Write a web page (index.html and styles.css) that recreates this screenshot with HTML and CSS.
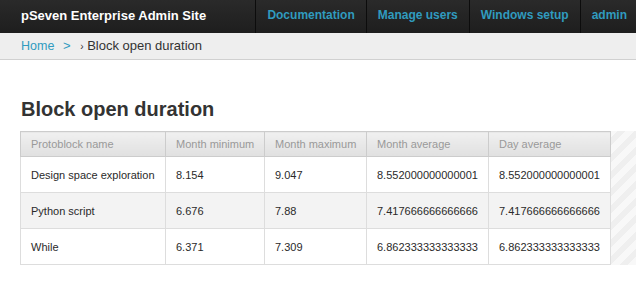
FILE: index.html
```html
<!DOCTYPE html>
<html lang="en">
<head>
    <meta charset="UTF-8">
    <title>Block open duration | pSeven Enterprise Admin Site</title>
    <link rel="stylesheet" href="styles.css">
</head>
<body>
    <header id="header">
        <div class="branding">pSeven Enterprise Admin Site</div>
        <nav class="user-tools">
            <a href="#">Documentation</a>
            <a href="#">Manage users</a>
            <a href="#">Windows setup</a>
            <a href="#">admin</a>
        </nav>
    </header>
    <div class="breadcrumbs">
        <a href="#">Home</a>
        <span class="sep">&gt;</span>
        <span class="current"><span class="mark">›</span> Block open duration</span>
    </div>
    <div id="content">
        <h1>Block open duration</h1>
        <div class="results">
            <table id="result_list">
                <thead>
                    <tr>
                        <th class="col-name">Protoblock name</th>
                        <th class="col-min">Month minimum</th>
                        <th class="col-max">Month maximum</th>
                        <th class="col-avg">Month average</th>
                        <th class="col-day">Day average</th>
                    </tr>
                </thead>
                <tbody>
                    <tr>
                        <td>Design space exploration</td>
                        <td>8.154</td>
                        <td>9.047</td>
                        <td>8.552000000000001</td>
                        <td>8.552000000000001</td>
                    </tr>
                    <tr class="row2">
                        <td>Python script</td>
                        <td>6.676</td>
                        <td>7.88</td>
                        <td>7.417666666666666</td>
                        <td>7.417666666666666</td>
                    </tr>
                    <tr>
                        <td>While</td>
                        <td>6.371</td>
                        <td>7.309</td>
                        <td>6.862333333333333</td>
                        <td>6.862333333333333</td>
                    </tr>
                </tbody>
            </table>
        </div>
    </div>
</body>
</html>
```

FILE: styles.css
```css
body {
    margin: 0;
    padding: 0;
    font-family: "Liberation Sans", Arial, sans-serif;
    font-size: 12px;
    color: #333;
    background: #fff;
}

a {
    color: #309bbf;
    text-decoration: none;
}

/* top bar */
#header {
    display: flex;
    justify-content: space-between;
    align-items: stretch;
    height: 33px;
    background: linear-gradient(#2a2a2a, #1e1e1e);
    color: #fff;
    white-space: nowrap;
}

.branding {
    padding-left: 21px;
    line-height: 31px;
    font-size: 13px;
    font-weight: bold;
}

.user-tools {
    display: flex;
}

.user-tools a {
    display: block;
    padding: 0 11px;
    line-height: 31px;
    font-size: 12px;
    font-weight: bold;
    border-left: 1px solid #0c0c0c;
}

.user-tools a:last-child {
    padding-right: 9px;
}

/* breadcrumbs */
.breadcrumbs {
    height: 26px;
    line-height: 25px;
    padding-left: 21px;
    background: #eee;
    border-bottom: 1px solid #d0d0d0;
    font-size: 13px;
}

.breadcrumbs a {
    font-size: 12.5px;
}

.breadcrumbs .sep {
    color: #309bbf;
    margin: 0 6px 0 5px;
}

.breadcrumbs .current {
    color: #333;
}

.breadcrumbs .mark {
    font-size: 10px;
}

/* content */
#content {
    padding: 0 0 0 20px;
}

h1 {
    margin: 37px 0 0 1px;
    font-size: 20px;
    line-height: 24px;
    font-weight: bold;
    color: #333;
}

.results {
    margin-top: 10px;
    background: repeating-linear-gradient(-45deg, #f8f8f8 0, #f8f8f8 6px, #efefef 6px, #efefef 12px);
}

#result_list {
    width: 591px;
    table-layout: fixed;
    border-collapse: collapse;
    background: #fff;
    border: 1px solid #ccc;
    font-size: 11px;
    white-space: nowrap;
}

#result_list th {
    height: 24px;
    padding: 0 10px;
    text-align: left;
    font-weight: normal;
    color: #999;
    background: linear-gradient(#f0f0f0, #e0e0e0);
    border: 1px solid #ccc;
    border-top: none;
}

#result_list td {
    height: 35px;
    padding: 0 10px;
    color: #2a2a2a;
    border: 1px solid #ddd;
}

#result_list tr.row2 td {
    background: #f3f3f3;
}

.col-name { width: 124px; }
.col-min { width: 78px; }
.col-max { width: 81px; }
.col-avg { width: 101px; }
.col-day { width: 101px; }
```
